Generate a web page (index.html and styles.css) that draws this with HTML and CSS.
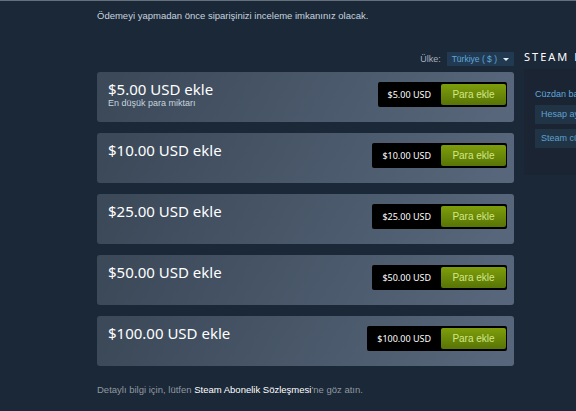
FILE: index.html
```html
<!DOCTYPE html>
<html lang="tr">
<head>
<meta charset="utf-8">
<link rel="stylesheet" href="styles.css">
</head>
<body>
<div class="topline"></div>
<div class="page">
  <div class="main">
    <p class="intro">Ödemeyi yapmadan önce siparişinizi inceleme imkanınız olacak.</p>
    <div class="country-row">
      <span class="country-label">Ülke:</span>
      <span class="country-select">Türkiye ( $ ) <span class="arrow"></span></span>
    </div>
    <div class="cards">
      <div class="card">
        <div class="card-text">
          <div class="card-title">$5.00 USD ekle</div>
          <div class="card-sub">En düşük para miktarı</div>
        </div>
        <div class="buy"><span class="price">$5.00 USD</span><span class="btn">Para ekle</span></div>
      </div>
      <div class="card">
        <div class="card-text"><div class="card-title">$10.00 USD ekle</div></div>
        <div class="buy"><span class="price">$10.00 USD</span><span class="btn">Para ekle</span></div>
      </div>
      <div class="card">
        <div class="card-text"><div class="card-title">$25.00 USD ekle</div></div>
        <div class="buy"><span class="price">$25.00 USD</span><span class="btn">Para ekle</span></div>
      </div>
      <div class="card">
        <div class="card-text"><div class="card-title">$50.00 USD ekle</div></div>
        <div class="buy"><span class="price">$50.00 USD</span><span class="btn">Para ekle</span></div>
      </div>
      <div class="card">
        <div class="card-text"><div class="card-title">$100.00 USD ekle</div></div>
        <div class="buy"><span class="price">$100.00 USD</span><span class="btn">Para ekle</span></div>
      </div>
    </div>
    <p class="footer">Detaylı bilgi için, lütfen <a class="footer-link">Steam Abonelik Sözleşmesi</a>'ne göz atın.</p>
  </div>
  <div class="side">
    <div class="side-title">STEAM HESABINIZ</div>
    <div class="side-panel">
      <div class="side-balance">Cüzdan bakiyesi</div>
      <div class="side-link">Hesap ayrıntıları</div>
      <div class="side-link">Steam cüzdanı</div>
    </div>
  </div>
</div>
</body>
</html>
```

FILE: styles.css
```css
html, body {
  margin: 0;
  padding: 0;
}
body {
  background: #1b2838;
  width: 576px;
  height: 411px;
  overflow: hidden;
  font-family: "Liberation Sans", Arial, sans-serif;
}
.topline {
  height: 1px;
  background: #66707c;
}
.page {
  display: flex;
  gap: 10px;
  padding-left: 97px;
}
.main {
  width: 417px;
  flex: none;
}
.intro {
  margin: 9px 0 0;
  font-size: 9.5px;
  line-height: 12px;
  color: #c6d4df;
}
.country-row {
  display: flex;
  justify-content: flex-end;
  align-items: center;
  gap: 6px;
  margin-top: 30px;
  height: 14px;
}
.country-label {
  font-size: 9px;
  color: #a6b2bd;
}
.country-select {
  display: flex;
  align-items: center;
  gap: 6px;
  height: 14px;
  padding: 0 5px 0 5px;
  background: #223a51;
  color: #5fa8dc;
  font-size: 8.5px;
}
.arrow {
  width: 0;
  height: 0;
  border-left: 3px solid transparent;
  border-right: 3px solid transparent;
  border-top: 3px solid #e6ecf0;
}
.cards {
  display: flex;
  flex-direction: column;
  gap: 11px;
  margin-top: 6px;
}
.card {
  height: 50px;
  border-radius: 3px;
  background: linear-gradient(-60deg, #57667a 5%, #3b4959 95%);
  display: flex;
  justify-content: space-between;
  align-items: flex-start;
  padding: 0 7px 0 11px;
  box-sizing: border-box;
}
.card-text {
  padding-top: 8px;
}
.card-title {
  font-family: "Noto Sans", sans-serif;
  font-size: 15px;
  line-height: 18px;
  color: #ffffff;
}
.card-sub {
  font-size: 9px;
  line-height: 10px;
  color: #c6d4df;
}
.buy {
  margin-top: 10px;
  display: flex;
  align-items: center;
  background: #000000;
  border-radius: 2px;
  padding: 2px 1px 2px 0;
  height: 25px;
  box-sizing: border-box;
}
.price {
  font-family: "Noto Sans", sans-serif;
  font-size: 9px;
  color: #ffffff;
  padding: 0 10px;
}
.btn {
  width: 65px;
  height: 21px;
  display: flex;
  align-items: center;
  justify-content: center;
  border-radius: 2px;
  background: linear-gradient(to bottom, #7c9c0b 5%, #5a7606 95%);
  color: #d2e885;
  font-size: 10px;
}
.footer {
  margin: 18px 0 0;
  font-size: 9.5px;
  line-height: 12px;
  color: #8f98a0;
}
.footer-link {
  color: #ffffff;
}
.side {
  flex: none;
  width: 200px;
}
.side-title {
  margin-top: 49px;
  font-family: "Noto Sans", sans-serif;
  font-size: 11px;
  line-height: 14px;
  letter-spacing: 2px;
  color: #ffffff;
  white-space: nowrap;
}
.side-panel {
  margin-top: 5px;
  height: 106px;
  background: #1a2433;
  padding: 20px 0 0 11px;
  box-sizing: border-box;
}
.side-balance {
  font-size: 9px;
  color: #5fa8dc;
  margin-bottom: 6px;
  white-space: nowrap;
}
.side-link {
  margin-bottom: 5px;
  height: 19px;
  line-height: 19px;
  padding-left: 6px;
  background: #213446;
  color: #5fa0d0;
  font-size: 9px;
  white-space: nowrap;
}
```
